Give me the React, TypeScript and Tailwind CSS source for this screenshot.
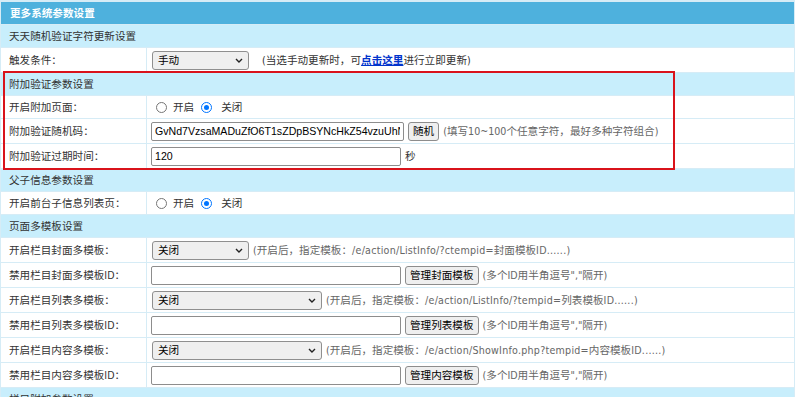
import type { ReactNode } from "react"

const fontStack = "font-['DejaVu_Sans_Condensed','Noto_Sans_CJK_SC',sans-serif]"
const inputFont = "font-['Liberation_Sans','Noto_Sans_CJK_SC',sans-serif]"

function Section({ title }: { title: string }) {
  return (
    <div className="flex h-[22px] items-center bg-[#c8eefc] pl-[8px] text-[#333]">{title}</div>
  )
}

function Row({ label, children, tall = true }: { label: string; children: ReactNode; tall?: boolean }) {
  return (
    <div className={`flex gap-px ${tall ? "h-[24px]" : "h-[22px]"}`}>
      <div className="flex w-[145px] shrink-0 items-center bg-white pl-[8px] text-[#333]">{label}</div>
      <div className="flex flex-1 items-center gap-[4px] bg-white pl-[4px] whitespace-nowrap">{children}</div>
    </div>
  )
}

function Select({ value, wide = false }: { value: string; wide?: boolean }) {
  return (
    <div
      className={`ml-px flex h-[19px] items-center justify-between rounded-[3px] border border-[#8f8f8f] bg-[#efefef] pl-[5px] pr-[5px] text-black ${
        wide ? "w-[170px]" : "w-[97px]"
      }`}
    >
      <span>{value}</span>
      <svg width="8" height="5" viewBox="0 0 8 5">
        <path d="M1 1 L4 4 L7 1" fill="none" stroke="#222" strokeWidth="1.4" />
      </svg>
    </div>
  )
}

function TextBox({ value = "", width = "w-[250px]" }: { value?: string; width?: string }) {
  return (
    <input
      readOnly
      value={value}
      className={`h-[19px] ${width} rounded-[2px] border border-[#8d8d8d] bg-white px-[3px] text-[10.6px] text-black outline-none ${inputFont}`}
    />
  )
}

function Btn({ children }: { children: ReactNode }) {
  return (
    <button className="flex h-[19px] items-center rounded-[3px] border border-[#8d8d8d] bg-[#efefef] px-[4px] text-black">
      {children}
    </button>
  )
}

function Radio({ checked }: { checked?: boolean }) {
  return checked ? (
    <span className="flex h-[11px] w-[11px] items-center justify-center rounded-full border-[1.5px] border-[#0075ff] bg-white">
      <span className="h-[5px] w-[5px] rounded-full bg-[#0075ff]" />
    </span>
  ) : (
    <span className="h-[11px] w-[11px] rounded-full border border-[#767676] bg-white" />
  )
}

function RadioPair() {
  return (
    <div className="ml-[5px] flex items-center text-[#333]">
      <Radio />
      <span className="ml-[6px]">开启</span>
      <span className="ml-[7px]">
        <Radio checked />
      </span>
      <span className="ml-[9px]">关闭</span>
    </div>
  )
}

// hint like "(开启后，指定模板：/e/action/...=xx模板ID......)"
function TplHint({ path, name }: { path: string; name: string }) {
  return (
    <span className="text-[#666]">
      (开启后，指定模板：<span className="tracking-[0.25px]">{path}</span>
      {name}
      <span className="tracking-[0.25px]">ID......)</span>
    </span>
  )
}

export default function App() {
  const hint = "text-[#666]"
  return (
    <div className={`relative h-[397px] w-[795px] overflow-hidden bg-white text-[10.6px] leading-none ${fontStack}`}>
      <div className="flex flex-col gap-px bg-[#d6ecf6] px-px pt-[2px]">
        <div className="flex h-[22px] items-center bg-[#4eb1dd] pl-[9px] font-bold text-white">更多系统参数设置</div>

        <Section title="天天随机验证字符更新设置" />
        <Row label="触发条件：">
          <Select value="手动" />
          <span className="ml-[9px] text-[#333]">
            (当选手动更新时，可
            <a href="#" className="font-bold text-[#0033cc] underline">
              点击这里
            </a>
            进行立即更新)
          </span>
        </Row>

        <Section title="附加验证参数设置" />
        <Row label="开启附加页面：" tall={false}>
          <RadioPair />
        </Row>
        <Row label="附加验证随机码：">
          <TextBox value="GvNd7VzsaMADuZfO6T1sZDpBSYNcHkZ54vzuUhN4qWx8" width="w-[253px]" />
          <Btn>随机</Btn>
          <span className={hint}>(填写10~100个任意字符，最好多种字符组合)</span>
        </Row>
        <Row label="附加验证过期时间：">
          <TextBox value="120" />
          <span className="text-[#333]">秒</span>
        </Row>

        <Section title="父子信息参数设置" />
        <Row label="开启前台子信息列表页：" tall={false}>
          <RadioPair />
        </Row>

        <Section title="页面多模板设置" />
        <Row label="开启栏目封面多模板：">
          <Select value="关闭" />
          <TplHint path="/e/action/ListInfo/?ctempid=" name="封面模板" />
        </Row>
        <Row label="禁用栏目封面多模板ID：">
          <TextBox />
          <Btn>管理封面模板</Btn>
          <span className={hint}>(多个ID用半角逗号","隔开)</span>
        </Row>
        <Row label="开启栏目列表多模板：">
          <Select value="关闭" wide />
          <TplHint path="/e/action/ListInfo/?tempid=" name="列表模板" />
        </Row>
        <Row label="禁用栏目列表多模板ID：">
          <TextBox />
          <Btn>管理列表模板</Btn>
          <span className={hint}>(多个ID用半角逗号","隔开)</span>
        </Row>
        <Row label="开启栏目内容多模板：">
          <Select value="关闭" wide />
          <TplHint path="/e/action/ShowInfo.php?tempid=" name="内容模板" />
        </Row>
        <Row label="禁用栏目内容多模板ID：">
          <TextBox />
          <Btn>管理内容模板</Btn>
          <span className={hint}>(多个ID用半角逗号","隔开)</span>
        </Row>

        <Section title="栏目附加参数设置" />
      </div>

      {/* red highlight box */}
      <div className="pointer-events-none absolute left-[3px] top-[71px] h-[99px] w-[672px] border-2 border-[#d9131b]" />
    </div>
  )
}
